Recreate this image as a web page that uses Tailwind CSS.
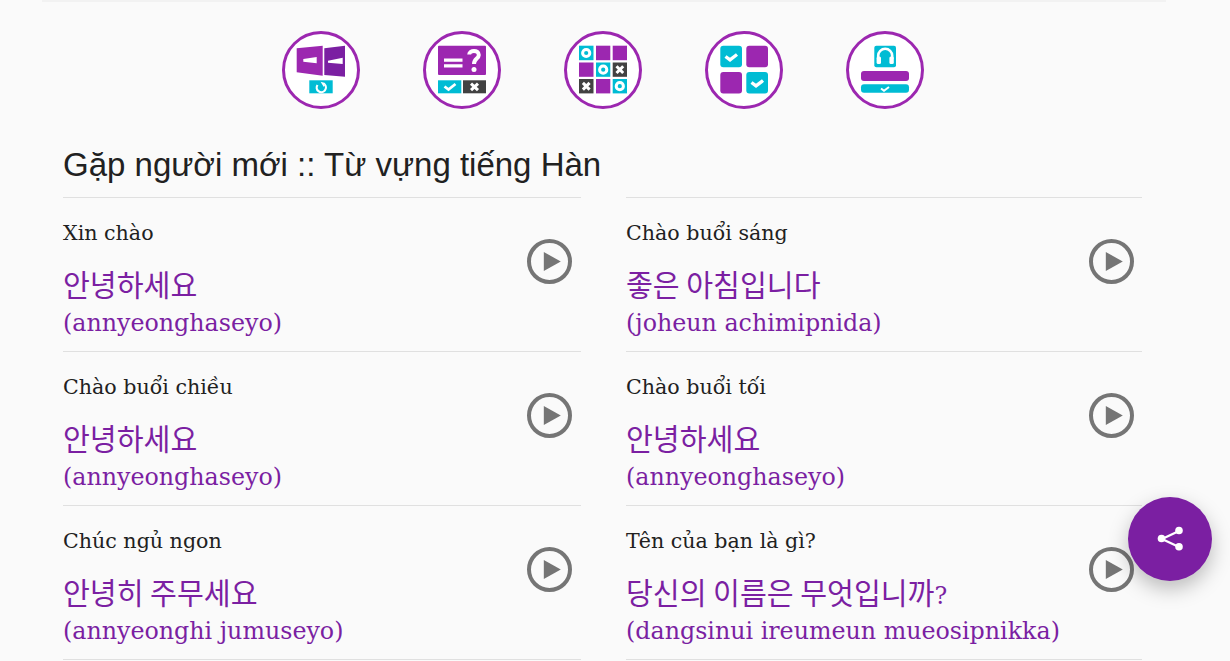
<!DOCTYPE html>
<html lang="vi">
<head>
<meta charset="utf-8">
<script src="https://cdn.jsdelivr.net/npm/@tailwindcss/browser@4"></script>
</head>
<body class="bg-[#fafafa] h-[661px] overflow-hidden relative">
<div class="ml-[42px] w-[1124px] h-[2px] bg-[#f2f2f2]"></div>
<div class="flex gap-[63px] pl-[282px] pt-[29px]">
  <svg class="w-[78px] h-[78px]" viewBox="0 0 78 78"><circle cx="39" cy="39" r="37.5" fill="#fff" stroke="#9c27b0" stroke-width="3"/>
    <path d="M14.7 17.3 40.7 14.7V44.7L14.7 41.3Z" fill="#9c27b0"/><path d="M42.3 17.3 63 14.7V45.7L42.3 44Z" fill="#7b1fa2"/>
    <path d="M21.3 28 34.7 26V32.3L21.3 30.8Z M46 29.7 60.7 26.7V33L46 31.8Z" fill="#fff"/>
    <rect x="27.3" y="49.3" width="23.4" height="13" fill="#00bcd4"/><path d="M35.5 54A4.6 4.6 0 1 0 42.5 53.3" fill="none" stroke="#fff" stroke-width="2.2"/><path d="M38.6 50.8l4.6 1.2-1.4 4Z" fill="#fff"/>
  </svg>
  <svg class="w-[78px] h-[78px]" viewBox="0 0 78 78"><circle cx="39" cy="39" r="37.5" fill="#fff" stroke="#9c27b0" stroke-width="3"/>
    <rect x="15" y="14.7" width="48" height="29.3" rx="1" fill="#9c27b0"/>
    <path d="M21 27.5H39.5V30.8H21Z M21 33.2H39.5V36.5H21Z" fill="#fff"/>
    <path d="M46.2 23.5C46.2 18.8 55.8 18.5 55.8 24C55.8 27.8 51 27.5 51 33" fill="none" stroke="#fff" stroke-width="4"/><circle cx="51" cy="38.5" r="2.5" fill="#fff"/>
    <rect x="15" y="49.3" width="23.3" height="13" fill="#00bcd4"/><rect x="40" y="49.3" width="23" height="13" fill="#424242"/>
    <path d="M21.5 55.5 25.5 58.5 32.5 53" fill="none" stroke="#fff" stroke-width="2.8"/><path d="M48 52.6 55 59.2M55 52.6 48 59.2" stroke="#fff" stroke-width="3"/>
  </svg>
  <svg class="w-[78px] h-[78px]" viewBox="0 0 78 78"><circle cx="39" cy="39" r="37.5" fill="#fff" stroke="#9c27b0" stroke-width="3"/>
    <rect x="15" y="14.7" width="14.5" height="14.5" fill="#00bcd4"/><rect x="32" y="14.7" width="14.3" height="14.5" fill="#9c27b0"/><rect x="48.7" y="14.7" width="14.3" height="14.5" fill="#9c27b0"/>
    <rect x="15" y="31.5" width="14.5" height="14.3" fill="#9c27b0"/><rect x="32" y="31.5" width="14.3" height="14.3" fill="#00bcd4"/><rect x="48.7" y="31.5" width="14.3" height="14.3" fill="#424242"/>
    <rect x="15" y="48" width="14.5" height="14.4" fill="#424242"/><rect x="32" y="48" width="14.3" height="14.4" fill="#9c27b0"/><rect x="48.7" y="48" width="14.3" height="14.4" fill="#00bcd4"/>
    <g fill="none" stroke="#fff" stroke-width="3"><circle cx="22.2" cy="22" r="3.6"/><circle cx="39.2" cy="38.7" r="3.6"/><circle cx="55.8" cy="55.2" r="3.6"/><path d="M52.5 35.3 59.2 42M59.2 35.3 52.5 42M18.9 51.9 25.6 58.6M25.6 51.9 18.9 58.6"/></g>
  </svg>
  <svg class="w-[78px] h-[78px]" viewBox="0 0 78 78"><circle cx="39" cy="39" r="37.5" fill="#fff" stroke="#9c27b0" stroke-width="3"/>
    <rect x="15.3" y="14.7" width="21.7" height="21.5" rx="3" fill="#00bcd4"/><rect x="41.3" y="14.7" width="21.7" height="21.5" rx="3" fill="#9c27b0"/>
    <rect x="15.3" y="41" width="21.7" height="21.5" rx="3" fill="#9c27b0"/><rect x="41.3" y="41" width="21.7" height="21.5" rx="3" fill="#00bcd4"/>
    <path d="M20.5 25.5 25 28.8 32 23.5M46.5 51.5 51 54.8 58 49.5" fill="none" stroke="#fff" stroke-width="3.4"/>
  </svg>
  <svg class="w-[78px] h-[78px]" viewBox="0 0 78 78"><circle cx="39" cy="39" r="37.5" fill="#fff" stroke="#9c27b0" stroke-width="3"/>
    <rect x="28.3" y="14.7" width="21.7" height="21.5" rx="2" fill="#00bcd4"/>
    <path d="M32.2 28V24.8A7 7 0 0 1 46.2 24.8V28" fill="none" stroke="#fff" stroke-width="2.6"/><rect x="30.6" y="25.5" width="4.4" height="7.5" rx="1.5" fill="#fff"/><rect x="43.4" y="25.5" width="4.4" height="7.5" rx="1.5" fill="#fff"/>
    <rect x="15" y="40" width="48" height="10" rx="3" fill="#9c27b0"/><rect x="15" y="53.3" width="48" height="8.4" rx="3" fill="#00bcd4"/>
    <path d="M35 57.5 38 59.8 43 56" fill="none" stroke="#fff" stroke-width="2"/>
  </svg>
</div>
<h1 class="ml-[63px] mt-[34px] h-[44px] text-[33px] leading-[44px] text-[#212121] font-['Liberation_Sans',sans-serif]">Gặp người mới :: Từ vựng tiếng Hàn</h1>
<div class="ml-[63px] mt-[10px] grid grid-cols-[518px_516px] gap-x-[45px] font-['DejaVu_Serif','Noto_Sans_CJK_KR',serif]">
  <div class="h-[154px] border-t border-[#e0e0e0] flex justify-between pr-[9px]">
    <div>
      <p class="pt-[21px] h-[63px] text-[20.6px] leading-[28px] text-[#212121]">Xin chào</p>
      <p class="h-[46px] text-[29.2px] leading-[44px] text-[#7b1fa2] font-['Noto_Sans_CJK_KR',sans-serif]">안녕하세요</p>
      <p class="pt-[2px] text-[23.75px] leading-[28px] text-[#7b1fa2]">(annyeonghaseyo)</p>
    </div>
    <svg class="w-[45px] h-[45px] mt-[41px]" viewBox="0 0 45 45"><circle cx="22.5" cy="22.5" r="20.5" fill="none" stroke="#757575" stroke-width="4"/><path d="M16.8 13 33.8 22.5 16.8 32Z" fill="#757575"/></svg>
  </div>
  <div class="h-[154px] border-t border-[#e0e0e0] flex justify-between pr-[8px]">
    <div>
      <p class="pt-[21px] h-[63px] text-[20.6px] leading-[28px] text-[#212121]">Chào buổi sáng</p>
      <p class="h-[46px] text-[29.2px] leading-[44px] text-[#7b1fa2] font-['Noto_Sans_CJK_KR',sans-serif]">좋은 아침입니다</p>
      <p class="pt-[2px] text-[23.75px] leading-[28px] text-[#7b1fa2]">(joheun achimipnida)</p>
    </div>
    <svg class="w-[45px] h-[45px] mt-[41px]" viewBox="0 0 45 45"><circle cx="22.5" cy="22.5" r="20.5" fill="none" stroke="#757575" stroke-width="4"/><path d="M16.8 13 33.8 22.5 16.8 32Z" fill="#757575"/></svg>
  </div>
  <div class="h-[154px] border-t border-[#e0e0e0] flex justify-between pr-[9px]">
    <div>
      <p class="pt-[21px] h-[63px] text-[20.6px] leading-[28px] text-[#212121]">Chào buổi chiều</p>
      <p class="h-[46px] text-[29.2px] leading-[44px] text-[#7b1fa2] font-['Noto_Sans_CJK_KR',sans-serif]">안녕하세요</p>
      <p class="pt-[2px] text-[23.75px] leading-[28px] text-[#7b1fa2]">(annyeonghaseyo)</p>
    </div>
    <svg class="w-[45px] h-[45px] mt-[41px]" viewBox="0 0 45 45"><circle cx="22.5" cy="22.5" r="20.5" fill="none" stroke="#757575" stroke-width="4"/><path d="M16.8 13 33.8 22.5 16.8 32Z" fill="#757575"/></svg>
  </div>
  <div class="h-[154px] border-t border-[#e0e0e0] flex justify-between pr-[8px]">
    <div>
      <p class="pt-[21px] h-[63px] text-[20.6px] leading-[28px] text-[#212121]">Chào buổi tối</p>
      <p class="h-[46px] text-[29.2px] leading-[44px] text-[#7b1fa2] font-['Noto_Sans_CJK_KR',sans-serif]">안녕하세요</p>
      <p class="pt-[2px] text-[23.75px] leading-[28px] text-[#7b1fa2]">(annyeonghaseyo)</p>
    </div>
    <svg class="w-[45px] h-[45px] mt-[41px]" viewBox="0 0 45 45"><circle cx="22.5" cy="22.5" r="20.5" fill="none" stroke="#757575" stroke-width="4"/><path d="M16.8 13 33.8 22.5 16.8 32Z" fill="#757575"/></svg>
  </div>
  <div class="h-[154px] border-t border-[#e0e0e0] flex justify-between pr-[9px]">
    <div>
      <p class="pt-[21px] h-[63px] text-[20.6px] leading-[28px] text-[#212121]">Chúc ngủ ngon</p>
      <p class="h-[46px] text-[29.2px] leading-[44px] text-[#7b1fa2] font-['Noto_Sans_CJK_KR',sans-serif]">안녕히 주무세요</p>
      <p class="pt-[2px] text-[23.75px] leading-[28px] text-[#7b1fa2]">(annyeonghi jumuseyo)</p>
    </div>
    <svg class="w-[45px] h-[45px] mt-[41px]" viewBox="0 0 45 45"><circle cx="22.5" cy="22.5" r="20.5" fill="none" stroke="#757575" stroke-width="4"/><path d="M16.8 13 33.8 22.5 16.8 32Z" fill="#757575"/></svg>
  </div>
  <div class="h-[154px] border-t border-[#e0e0e0] flex justify-between pr-[8px]">
    <div>
      <p class="pt-[21px] h-[63px] text-[20.6px] leading-[28px] text-[#212121]">Tên của bạn là gì?</p>
      <p class="h-[46px] text-[29.2px] leading-[44px] text-[#7b1fa2] font-['Noto_Sans_CJK_KR',sans-serif]">당신의 이름은 무엇입니까<span class="text-[23.75px] font-['DejaVu_Serif',serif]">?</span></p>
      <p class="pt-[2px] text-[23.75px] leading-[28px] text-[#7b1fa2]">(dangsinui ireumeun mueosipnikka)</p>
    </div>
    <svg class="w-[45px] h-[45px] mt-[41px]" viewBox="0 0 45 45"><circle cx="22.5" cy="22.5" r="20.5" fill="none" stroke="#757575" stroke-width="4"/><path d="M16.8 13 33.8 22.5 16.8 32Z" fill="#757575"/></svg>
  </div>
  <div class="border-t border-[#e0e0e0]"></div>
  <div class="border-t border-[#e0e0e0]"></div>
</div>
<button class="absolute left-[1128px] top-[497px] w-[84px] h-[84px] rounded-full bg-[#7b1fa2] shadow-[0_8px_20px_rgba(0,0,0,0.25)] flex items-center justify-center">
  <svg class="w-[28px] h-[28px]" viewBox="0 0 28 28"><path d="M6 14 23 6M6 14 23 22" stroke="#fff" stroke-width="2.4"/><circle cx="5.5" cy="13.5" r="3.8" fill="#fff"/><circle cx="23" cy="5.5" r="3.8" fill="#fff"/><circle cx="23" cy="21.7" r="3.8" fill="#fff"/></svg>
</button>
</body>
</html>
